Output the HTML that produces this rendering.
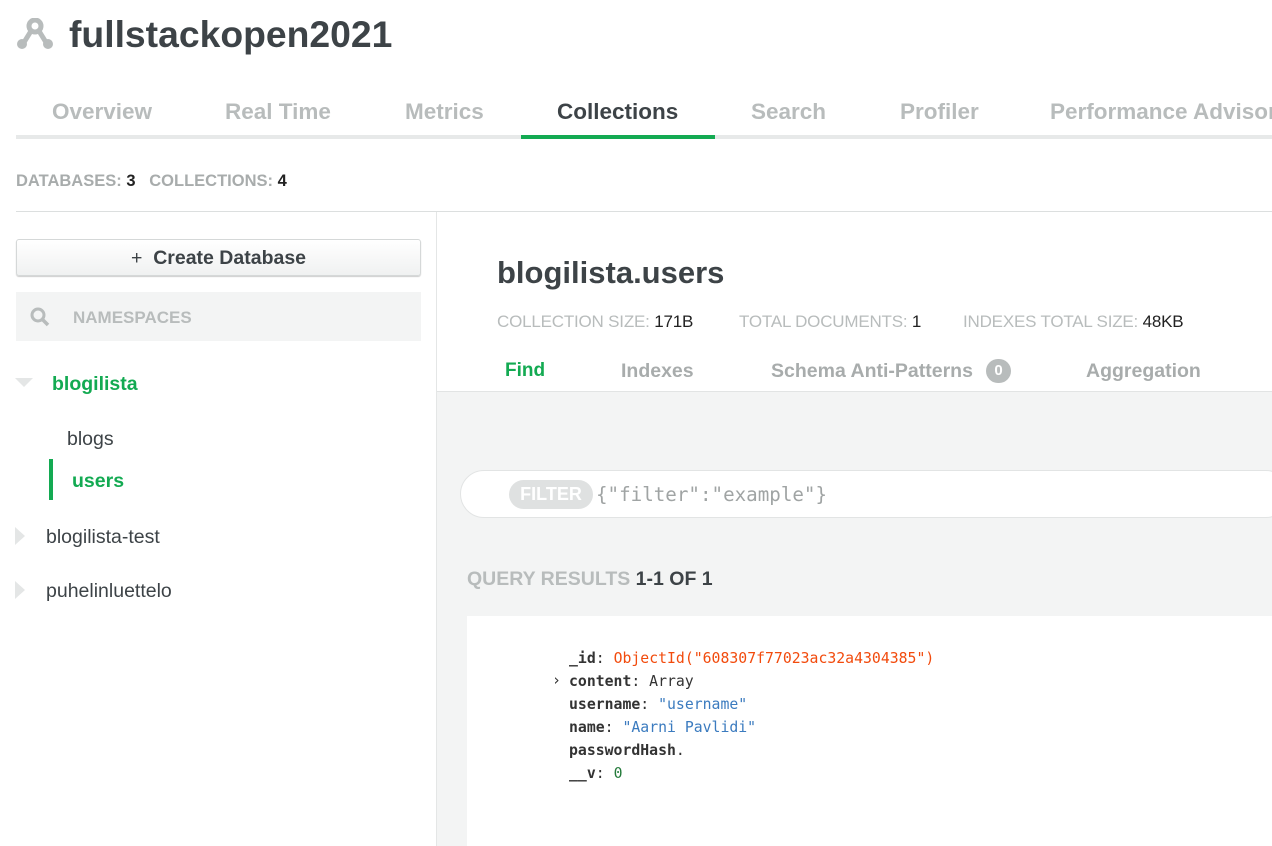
<!DOCTYPE html>
<html><head><meta charset="utf-8"><style>
*{margin:0;padding:0;box-sizing:border-box}
body{width:1272px;height:846px;overflow:hidden;background:#fff;font-family:"Liberation Sans",sans-serif;position:relative}
.a{position:absolute;white-space:nowrap}
.tab{position:absolute;top:99px;font-size:22.5px;font-weight:bold;color:#b8bcbc;white-space:nowrap}
.mono{font-family:"DejaVu Sans Mono","Liberation Mono",monospace;font-size:14.8px}
</style></head><body>
<svg class="a" style="left:17px;top:18px" width="36" height="32" viewBox="0 0 36 32"><circle cx="18" cy="8" r="6" fill="none" stroke="#b8bcbc" stroke-width="5"/><path d="M14 13 L6 26 M22 13 L30 26" stroke="#b8bcbc" stroke-width="5"/><circle cx="5" cy="26" r="5" fill="#b8bcbc"/><circle cx="31" cy="26" r="5" fill="#b8bcbc"/></svg>
<div class="a" style="left:69px;top:13px;font-size:37.3px;font-weight:bold;color:#3d4347">fullstackopen2021</div>
<div class="tab" style="left:52px">Overview</div>
<div class="tab" style="left:225px">Real Time</div>
<div class="tab" style="left:405px">Metrics</div>
<div class="tab" style="left:557px;color:#3d4347">Collections</div>
<div class="tab" style="left:751px">Search</div>
<div class="tab" style="left:900px">Profiler</div>
<div class="tab" style="left:1050px">Performance Advisor</div>
<div class="a" style="left:16px;top:135px;width:1256px;height:4px;background:#e7e9e9"></div>
<div class="a" style="left:521px;top:135px;width:194px;height:4px;background:#13aa52"></div>
<div class="a" style="left:16px;top:172px;font-size:16.5px;font-weight:bold;color:#a8acac">DATABASES: <span style="color:#222">3</span>&nbsp;&nbsp; COLLECTIONS: <span style="color:#222">4</span></div>
<div class="a" style="left:16px;top:211px;width:1256px;height:1px;background:#dcdfdf"></div>
<div class="a" style="left:436px;top:212px;width:1px;height:634px;background:#e4e6e6"></div>
<div class="a" style="left:16px;top:239px;width:405px;height:37px;border:1px solid #d5d8d8;border-radius:3px;background:linear-gradient(#fff,#f0f1f1);box-shadow:0 1px 1px #ccc;text-align:center;font-size:19.5px;font-weight:bold;color:#3d4347;line-height:37px"><span style="font-weight:normal">+</span>&nbsp; Create Database</div>
<div class="a" style="left:16px;top:292px;width:405px;height:49px;background:#f3f4f4"></div>
<svg class="a" style="left:30px;top:307px" width="20" height="20" viewBox="0 0 20 20"><circle cx="8" cy="8" r="6" fill="none" stroke="#b8bcbc" stroke-width="3"/><path d="M12.5 12.5 L18 18" stroke="#b8bcbc" stroke-width="3.5"/></svg>
<div class="a" style="left:73px;top:308px;font-size:17px;font-weight:bold;color:#b8bcbc">NAMESPACES</div>
<svg class="a" style="left:15px;top:378px" width="20" height="12"><path d="M0 0 L18 0 L9 9Z" fill="#e4e6e6"/></svg>
<div class="a" style="left:52px;top:373px;font-size:19.5px;font-weight:bold;color:#13aa52">blogilista</div>
<div class="a" style="left:67px;top:428px;font-size:19.5px;color:#3d4347">blogs</div>
<div class="a" style="left:49px;top:459px;width:4px;height:41px;background:#13aa52"></div>
<div class="a" style="left:72px;top:470px;font-size:19.5px;font-weight:bold;color:#13aa52">users</div>
<svg class="a" style="left:15px;top:527px" width="12" height="20"><path d="M0 0 L10 9 L0 18Z" fill="#e4e6e6"/></svg>
<div class="a" style="left:46px;top:526px;font-size:19.5px;color:#3d4347">blogilista-test</div>
<svg class="a" style="left:15px;top:581px" width="12" height="20"><path d="M0 0 L10 9 L0 18Z" fill="#e4e6e6"/></svg>
<div class="a" style="left:46px;top:580px;font-size:19.5px;color:#3d4347">puhelinluettelo</div>
<div class="a" style="left:497px;top:255px;font-size:31px;font-weight:bold;color:#3d4347">blogilista.users</div>
<div class="a" style="left:497px;top:312px;font-size:17px;color:#b8bcbc;letter-spacing:-0.2px">COLLECTION SIZE: <span style="color:#222">171B</span></div>
<div class="a" style="left:739px;top:312px;font-size:17px;color:#b8bcbc;letter-spacing:-0.2px">TOTAL DOCUMENTS: <span style="color:#222">1</span></div>
<div class="a" style="left:963px;top:312px;font-size:17px;color:#b8bcbc;letter-spacing:-0.2px">INDEXES TOTAL SIZE: <span style="color:#222">48KB</span></div>
<div class="a" style="left:505px;top:360px;font-size:19px;font-weight:bold;color:#13aa52">Find</div>
<div class="a" style="left:621px;top:360px;font-size:19.5px;font-weight:bold;color:#a8acac">Indexes</div>
<div class="a" style="left:771px;top:360px;font-size:19.5px;font-weight:bold;color:#a8acac">Schema Anti-Patterns</div>
<div class="a" style="left:986px;top:359px;width:25px;height:24px;border-radius:12px;background:#b8bcbc;color:#fff;font-size:15px;font-weight:bold;text-align:center;line-height:24px">0</div>
<div class="a" style="left:1086px;top:360px;font-size:19.5px;font-weight:bold;color:#a8acac">Aggregation</div>
<div class="a" style="left:437px;top:391px;width:835px;height:455px;background:#f3f4f4;border-top:1px solid #e2e4e4"></div>
<div class="a" style="left:460px;top:470px;width:830px;height:48px;border:1px solid #e2e4e4;border-radius:24px;background:#fff"></div>
<div class="a" style="left:509px;top:480px;width:84px;height:29px;border-radius:15px;background:#dfe1e1;color:#fff;font-size:18px;font-weight:bold;text-align:center;line-height:29px">FILTER</div>
<div class="a mono" style="left:596px;top:483px;font-size:19.2px;color:#a0a4a4">{"filter":"example"}</div>
<div class="a" style="left:467px;top:568px;font-size:19.5px;font-weight:bold;color:#b8bcbc">QUERY RESULTS <span style="color:#3d4347">1-1 OF 1</span></div>
<div class="a" style="left:467px;top:616px;width:805px;height:230px;background:#fff"></div>
<div class="a mono" style="left:569px;top:647px;line-height:23px;color:#333">
<div><b>_id</b>: <span style="color:#f24b0d">ObjectId("608307f77023ac32a4304385")</span></div>
<div><b>content</b>: Array</div>
<div><b>username</b>: <span style="color:#3b7bbf">"username"</span></div>
<div><b>name</b>: <span style="color:#3b7bbf">"Aarni Pavlidi"</span></div>
<div><b>passwordHash</b>.</div>
<div><b>__v</b>: <span style="color:#237a3a">0</span></div>
</div>
<div class="a mono" style="left:552px;top:672px;color:#333">›</div>
</body></html>
